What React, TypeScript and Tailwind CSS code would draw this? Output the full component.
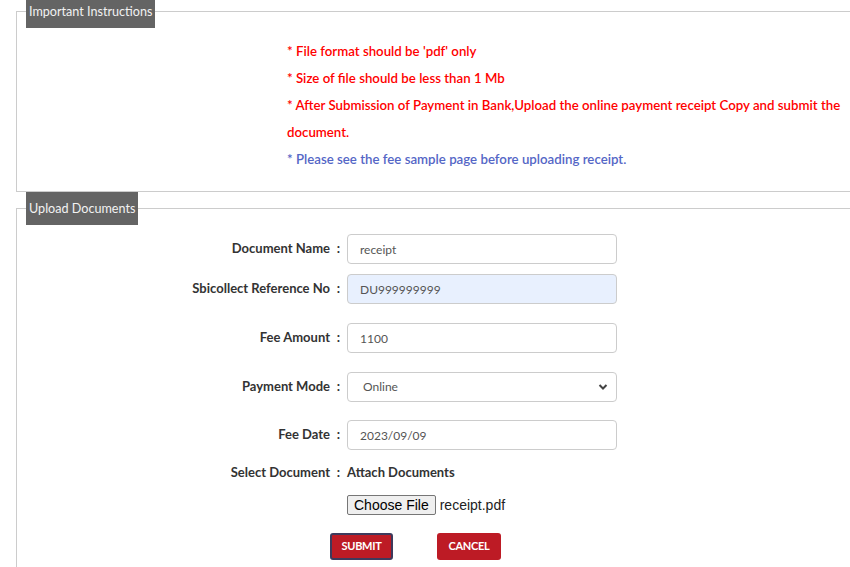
import React from "react";

const font = { fontFamily: "Lato, 'Open Sans', sans-serif" };

function Label({ children }: { children: React.ReactNode }) {
  return (
    <div className="flex items-center">
      <div className="w-[313px] text-right text-[13px] font-bold text-[#333]">{children}</div>
      <div className="w-[17px] text-center text-[13px] font-bold text-[#333]">:</div>
    </div>
  );
}

function Row({ label, children, className }: { label: string; children: React.ReactNode; className?: string }) {
  return (
    <div className={"flex items-center " + (className ?? "")}>
      <Label>{label}</Label>
      {children}
    </div>
  );
}

function TextInput({ value, bg }: { value: string; bg?: string }) {
  return (
    <input
      readOnly
      value={value}
      className={
        "h-[30px] w-[270px] rounded-[4px] border border-[#ccc] pl-[12px] text-[12px] text-[#555] outline-none " +
        (bg ?? "bg-white")
      }
    />
  );
}

export default function App() {
  return (
    <div className="w-[850px] h-[567px] overflow-hidden bg-white" style={font}>
      <fieldset className="mt-[-5px] ml-[16px] border border-r-0 border-[#ccc] pb-[18px]">
        <legend className="ml-[9px] h-[33px] bg-[#646464] px-[3px] text-[12.6px] leading-[33px] text-[#f2f2f2]">
          Important Instructions
        </legend>
        <div className="pt-[10px] pl-[270px] text-[13.25px] font-semibold leading-[27px] whitespace-nowrap">
          <div className="text-[#ff0000]">* File format should be 'pdf' only</div>
          <div className="text-[#ff0000]">* Size of file should be less than 1 Mb</div>
          <div className="text-[#ff0000]">
            * After Submission of Payment in Bank,Upload the online payment receipt Copy and submit the
            <br />
            document.
          </div>
          <div className="text-[#5466c6]">* Please see the fee sample page before uploading receipt.</div>
        </div>
      </fieldset>
      <fieldset className="ml-[16px] border border-r-0 border-b-0 border-[#ccc] pb-[20px]">
        <legend className="ml-[9px] h-[33px] bg-[#646464] px-[3px] text-[12.6px] leading-[33px] text-[#f2f2f2]">
          Upload Documents
        </legend>
        <Row label="Document Name" className="mt-[9px]">
          <TextInput value="receipt" />
        </Row>
        <Row label="Sbicollect Reference No" className="mt-[10px]">
          <TextInput value="DU999999999" bg="bg-[#e8f0fe]" />
        </Row>
        <Row label="Fee Amount" className="mt-[19px]">
          <TextInput value="1100" />
        </Row>
        <Row label="Payment Mode" className="mt-[19px]">
          <div className="relative h-[30px] w-[270px] rounded-[4px] border border-[#ccc] bg-white">
            <div className="pl-[15px] text-[12px] leading-[28px] text-[#555]">Online</div>
            <svg
              className="absolute right-[8px] top-[10px]"
              width="10"
              height="8"
              viewBox="0 0 10 8"
              fill="none"
            >
              <path d="M1.5 2 L5 5.5 L8.5 2" stroke="#444" strokeWidth="2" />
            </svg>
          </div>
        </Row>
        <Row label="Fee Date" className="mt-[18px]">
          <TextInput value="2023/09/09" />
        </Row>
        <div className="mt-[13px] flex h-[20px] items-center">
          <Label>Select Document</Label>
          <div className="text-[13px] font-bold text-[#333]">Attach Documents</div>
        </div>
        <div className="mt-[12px] flex h-[20px] items-center pl-[330px]">
          <div
            className="flex h-[20px] items-center rounded-[2px] border border-[#767676] bg-[#efefef] px-[6px] text-[14px] text-black"
            style={{ fontFamily: "'Liberation Sans', Arial, sans-serif" }}
          >
            Choose File
          </div>
          <div
            className="ml-[4px] text-[14px] text-[#222]"
            style={{ fontFamily: "'Liberation Sans', Arial, sans-serif" }}
          >
            receipt.pdf
          </div>
        </div>
        <div className="mt-[18px] flex pl-[313px]">
          <button className="h-[27px] w-[63px] rounded-[3px] border-2 border-[#3e3a5c] bg-[#bd1b25] text-[11px] font-bold text-white tracking-[-0.3px]">
            SUBMIT
          </button>
          <button className="ml-[44px] h-[27px] w-[64px] rounded-[3px] bg-[#bd1b25] text-[11px] font-bold text-white tracking-[-0.3px]">
            CANCEL
          </button>
        </div>
      </fieldset>
    </div>
  );
}
